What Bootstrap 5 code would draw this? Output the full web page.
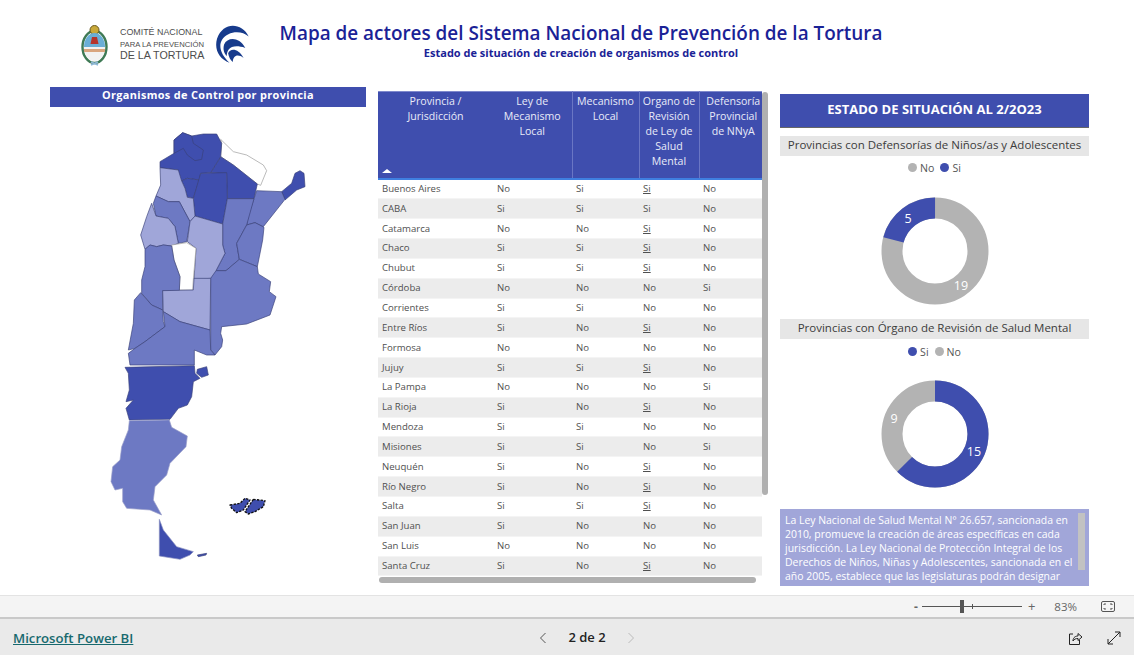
<!DOCTYPE html>
<html lang="es">
<head>
    <meta charset="UTF-8">
    <title>Mapa de actores</title>
    <link rel="stylesheet" href="https://cdn.jsdelivr.net/npm/bootstrap@5.3.0/dist/css/bootstrap.min.css">
    <style>
        html, body { height: 655px; overflow: hidden; }
        body { font-family: "Open Sans", "Noto Sans", sans-serif; background: #fff; color: #444; }
        .report-area { height: 595px; overflow: hidden; }

        /* header */
        .report-head { height: 86px; }
        .logo-box { width: 250px; padding: 24px 0 0 81px; }
        .logo-text { width: 108px; padding: 3px 0 0 12px; color: #4d4d4d; line-height: 11.5px; white-space: nowrap; font-family: "Liberation Sans", sans-serif; font-size: 7.7px; }
        .logo-text .first { font-size: 8.9px; }
        .logo-text .big { font-size: 10.7px; }
        .title-box { width: 662px; text-align: center; padding-top: 20px; color: #1a2296; }
        .title-box h1 { font-size: 18.9px; font-weight: 600; margin: 0; line-height: 26px; white-space: nowrap; }
        .title-box h2 { font-size: 11px; font-weight: 700; margin: 0; line-height: 14px; }

        /* columns */
        .map-col { width: 316px; margin-left: 50px; margin-right: 12px; margin-top: 1px; }
        .map-title { background: #3f4eae; color: #fff; font-size: 10.9px; font-weight: 700; text-align: center; height: 20px; line-height: 16px; letter-spacing: .35px; }
        .map-svg { display: block; width: 220px; height: 460px; margin: 13px 0 0 50px; }

        .tbl-col { width: 390px; margin-top: 5px; }
        .tbl-wrap { width: 384px; }
        .act-table { table-layout: fixed; width: 384px; font-size: 9.6px; margin: 0; }
        .act-table thead th { background: #3f4eae; color: #e9ebf8; font-weight: 400; font-size: 10.6px; line-height: 15px; text-align: center; vertical-align: top; height: 87.5px; padding: 2px 1px 0; border-top: 1px solid #7f89cc; border-bottom: 2px solid #3f7fe0; border-right: 1px solid #6a76c4; position: relative; }
        .act-table thead th.no-line { border-right: 0; }
        .act-table thead th.last-head { padding-left: 6px; }
        .sort-up { position: absolute; left: 4px; bottom: 5px; width: 0; height: 0; border-left: 5px solid transparent; border-right: 5px solid transparent; border-bottom: 4px solid #fff; }
        .act-table tbody td { height: 19.85px; padding: 0 0 0 4px; line-height: 18px; color: #505050; border: 0; border-bottom: 1px solid #f4f4f4; vertical-align: middle; white-space: nowrap; }
        .act-table tbody tr:nth-child(even) td { background: #ececec; }
        .scroll-v { width: 6px; height: 403px; margin: 1px 0 0 0; background: #b0b0b0; border-radius: 3px; }
        .scroll-h { width: 377px; height: 6px; margin: 1px 0 0 1px; background: #b0b0b0; border-radius: 3px; }

        .side-col { width: 309px; margin-left: 12px; margin-top: 8px; }
        .state-banner { background: #3f4eae; color: #fff; height: 34px; line-height: 31px; font-size: 13px; font-weight: 700; text-align: center; border-bottom: 1px solid #666; }
        .sub-band { background: #e6e6e6; color: #3c3c3c; font-size: 11.5px; height: 20px; line-height: 18px; text-align: center; white-space: nowrap; }
        .band-one { margin-top: 8px; }
        .band-two { margin-top: 13px; }
        .legend-row { font-size: 10.6px; height: 13px; line-height: 13px; color: #555; margin-top: 6px; gap: 6px; }
        .legend-low { margin-top: 7px; }
        .dot { display: inline-block; width: 9px; height: 9px; border-radius: 50%; margin-right: 3px; }
        .dot-blue { background: #3f4eae; }
        .dot-grey { background: #b3b3b3; }
        .donut { display: block; width: 110px; height: 110px; margin: 21px auto 0; }
        .donut-low { margin-top: 20px; }
        .donut text { font-family: "Open Sans", sans-serif; font-size: 12.5px; fill: #fff; text-anchor: middle; }
        .note-box { background: #a1a6d9; color: #fff; height: 77px; margin-top: 20px; overflow: hidden; padding: 4px 15px 0 5px; font-size: 10.45px; line-height: 14px; position: relative; }
        .note-scroll { position: absolute; right: 4px; top: 4px; width: 7px; height: 57px; background: #c2c2c2; }

        /* power bi chrome */
        .zoom-bar { height: 24px; background: #f4f4f4; border-top: 1px solid #e3e3e3; border-bottom: 2px solid #c9c9c9; color: #666; font-size: 11.5px; padding-right: 19px; }
        .zoom-track { width: 100px; height: 1px; background: #555; position: relative; margin: 0 4px; }
        .zoom-thumb { position: absolute; left: 38px; top: -6px; width: 4px; height: 13px; background: #555; }
        .zoom-tick { position: absolute; left: 50px; top: -2px; width: 1px; height: 5px; background: #555; }
        .zoom-minus { font-weight: 700; font-size: 12px; }
        .zoom-plus { font-size: 13px; margin-left: 2px; }
        .zoom-pct { margin-left: 19px; }
        .foot-bar { height: 36px; background: #eaeaea; padding-top: 2px; }
        .pbi-link { color: #17696e; font-size: 13.2px; font-weight: 600; text-decoration: underline; margin-left: 13px; width: 480px; white-space: nowrap; padding-top: 2px; }
        .pager { width: 120px; color: #222; font-size: 13px; font-weight: 600; margin-left: 34px; gap: 21px; }
        .foot-tools { margin-right: 13px; }
    </style>
</head>
<body>
    <div class="report-area">
        <!-- header with logos and title -->
        <div class="report-head d-flex">
            <div class="logo-box d-flex">
                <svg width="27" height="42" viewBox="0 0 27 42">
                    <ellipse cx="13.5" cy="23" rx="12" ry="16" fill="none" stroke="#3f7a55" stroke-width="2.4"/>
                    <circle cx="13.5" cy="6" r="4.5" fill="#c9a93a" stroke="#6b5a20"/>
                    <path d="M3 23a10.500 14 0 0 1 21 0z" fill="#6aaed6"/>
                    <path d="M3 23h21a10.500 14 0 0 1-21 0z" fill="#f2f2f2"/>
                    <path d="M11 13h5l1.500 7h-8z" fill="#b5342c"/>
                    <path d="M3 25h21v3H3z" fill="#d9a57e"/>
                    <path d="M10 38l7 3M17 38l-7 3" stroke="#8fb8d8" stroke-width="1.500"/>
                </svg>
                <div class="logo-text"><span class="first">COMITÉ NACIONAL</span><br>PARA LA PREVENCIÓN<br><span class="big">DE LA TORTURA</span></div>
                <svg width="33" height="39" viewBox="528 42 98 114">
                    <path d="M625 78C605 38 550 32 531 85C522 118 538 146 568 156C544 134 534 108 546 88C562 62 603 58 625 78Z" fill="#173b8c"/>
                    <path d="M615 112C596 78 562 80 552 102C548 116 552 128 560 136C560 118 572 98 615 112Z" fill="#173b8c"/>
                    <path d="M610 142C594 112 570 112 564 128C566 138 570 148 578 154C578 136 592 128 610 142Z" fill="#173b8c"/>
                </svg>
            </div>
            <div class="title-box">
                <h1>Mapa de actores del Sistema Nacional de Prevención de la Tortura</h1>
                <h2>Estado de situación de creación de organismos de control</h2>
            </div>
        </div>

        <div class="d-flex">
            <!-- map column -->
            <div class="map-col">
                <div class="map-title">Organismos de Control por provincia</div>
                <svg class="map-svg" viewBox="0 0 660 1380">
                    <g stroke="#3a4178" stroke-width="2" stroke-linejoin="round">
                        <!-- norte -->
                        <path fill="#fff" stroke="#999" d="M362 58L400 95L440 105L490 135L500 152L482 196L472 192L400 135L362 110L365 70Z"/>
                        <path fill="#3f4eae" d="M362 110L400 135L472 192L462 236L382 236L380 160L332 158Z"/>
                        <path fill="#3f4eae" d="M180 125L222 100L222 60L248 38L275 48L310 42L350 42L365 70L362 110L332 158L302 160L298 180L262 175L245 183L235 165L235 150L180 143Z"/>
                        <path fill="#3f4eae" d="M275 48L280 70L310 90L305 118L285 122L262 105L250 85L222 100L222 60L248 38Z"/>
                        <path fill="#3f4eae" d="M245 183L262 175L298 180L280 235L262 232L255 205Z"/>
                        <path fill="#3f4eae" d="M302 160L380 158L382 236L368 312L285 288L280 235Z"/>
                        <path fill="#3f4eae" d="M545 215L575 190L585 160L600 152L612 160L615 200L590 210L555 240Z"/>
                        <!-- litoral -->
                        <path fill="#6d79c3" d="M470 212L545 215L555 238L490 320L465 308L440 315L445 285L462 236Z"/>
                        <path fill="#6d79c3" d="M382 236L462 236L440 315L410 370L418 418L378 452L348 452L375 400L368 375L368 312Z"/>
                        <path fill="#6d79c3" d="M440 315L465 308L492 322L488 360L472 440L418 418L410 370Z"/>
                        <path fill="#6d79c3" d="M332 452L378 452L418 418L472 440L475 462L512 485L508 515L528 530L510 585L440 612L365 620L362 640L368 660L365 680L345 705L332 690Z"/>
                        <!-- centro y cuyo -->
                        <path fill="#a0a6d9" d="M180 143L235 150L245 183L255 205L262 232L280 235L285 288L270 305L238 245L205 245L168 228L182 195Z"/>
                        <path fill="#6d79c3" d="M168 228L205 245L238 245L270 305L260 365L235 370L225 320L205 295L168 288L160 250Z"/>
                        <path fill="#a0a6d9" d="M155 250L168 288L205 295L225 320L235 370L215 378L190 375L170 380L150 375L135 388L122 345L140 290Z"/>
                        <path fill="#a0a6d9" d="M285 288L368 312L368 375L375 400L348 452L332 475L282 478L288 385L262 365L270 305Z"/>
                        <path fill="#fff" stroke="#999" d="M215 375L260 368L288 385L280 478L278 510L238 510L240 470L222 420Z"/>
                        <path fill="#6d79c3" d="M135 388L150 375L170 380L190 375L215 378L222 420L240 470L238 512L188 512L188 570L155 555L125 520L125 480L135 440Z"/>
                        <path fill="#a0a6d9" d="M188 512L280 510L282 475L332 475L330 630L240 605L190 575Z"/>
                        <!-- patagonia -->
                        <path fill="#6d79c3" d="M122 518L155 555L188 570L190 605L195 620L135 665L105 685L85 690L100 610L103 540Z"/>
                        <path fill="#6d79c3" d="M195 620L190 575L240 605L330 630L332 690L345 705L320 705L283 690L283 735L90 735L85 700L105 685L135 665Z"/>
                        <path fill="#3f4eae" d="M75 742L283 737L285 760L300 775L280 785L275 830L262 855L235 865L210 898L88 900L78 865L100 840L78 845L88 810L85 760Z"/>
                        <path fill="#3f4eae" d="M292 748L320 740L325 765L305 772L290 760Z"/>
                        <path fill="#6d79c3" d="M88 902L208 900L215 922L262 948L258 980L210 1030L200 1065L165 1100L160 1140L185 1185L150 1170L80 1165L68 1145L68 1105L45 1110L33 1085L38 1040L60 1020L65 980L85 930Z" stroke="#9a9fc8"/>
                        <path fill="#3f4eae" d="M178 1198L190 1230L230 1280L280 1295L270 1305L240 1318L178 1308Z" stroke="#8a90c0"/>
                        <path fill="#3f4eae" d="M292 1305L320 1300L318 1305L295 1310Z"/>
                        <!-- malvinas -->
                        <path fill="#3f4eae" stroke="#111" stroke-width="4" stroke-dasharray="7 4" d="M390 1155L420 1150L435 1135L450 1140L430 1170L410 1178L395 1165Z"/>
                        <path fill="#3f4eae" stroke="#111" stroke-width="4" stroke-dasharray="7 4" d="M460 1138L495 1142L490 1160L465 1175L445 1182L435 1175Z"/>
                    </g>
                </svg>
            </div>

            <!-- table column -->
            <div class="tbl-col">
                <div class="d-flex">
                    <div class="tbl-wrap">
                        <table class="table act-table">
                            <colgroup>
                                <col style="width:115px"><col style="width:79px"><col style="width:67px"><col style="width:60px"><col style="width:63px">
                            </colgroup>
                            <thead>
                                <tr>
                                    <th class="no-line">Provincia /<br>Jurisdicción<span class="sort-up"></span></th>
                                    <th>Ley de<br>Mecanismo<br>Local</th>
                                    <th>Mecanismo<br>Local</th>
                                    <th>Organo de<br>Revisión<br>de Ley de<br>Salud<br>Mental</th>
                                    <th class="no-line last-head">Defensoría<br>Provincial<br>de NNyA</th>
                                </tr>
                            </thead>
                            <tbody>
                                <tr><td>Buenos Aires</td><td>No</td><td>Si</td><td><u>Si</u></td><td>No</td></tr>
                                <tr><td>CABA</td><td>Si</td><td>Si</td><td>Si</td><td>No</td></tr>
                                <tr><td>Catamarca</td><td>No</td><td>No</td><td><u>Si</u></td><td>No</td></tr>
                                <tr><td>Chaco</td><td>Si</td><td>Si</td><td><u>Si</u></td><td>No</td></tr>
                                <tr><td>Chubut</td><td>Si</td><td>Si</td><td><u>Si</u></td><td>No</td></tr>
                                <tr><td>Córdoba</td><td>No</td><td>No</td><td>No</td><td>Si</td></tr>
                                <tr><td>Corrientes</td><td>Si</td><td>Si</td><td>No</td><td>No</td></tr>
                                <tr><td>Entre Ríos</td><td>Si</td><td>No</td><td><u>Si</u></td><td>No</td></tr>
                                <tr><td>Formosa</td><td>No</td><td>No</td><td>No</td><td>No</td></tr>
                                <tr><td>Jujuy</td><td>Si</td><td>Si</td><td><u>Si</u></td><td>No</td></tr>
                                <tr><td>La Pampa</td><td>No</td><td>No</td><td>No</td><td>Si</td></tr>
                                <tr><td>La Rioja</td><td>Si</td><td>No</td><td><u>Si</u></td><td>No</td></tr>
                                <tr><td>Mendoza</td><td>Si</td><td>Si</td><td>No</td><td>No</td></tr>
                                <tr><td>Misiones</td><td>Si</td><td>Si</td><td>No</td><td>Si</td></tr>
                                <tr><td>Neuquén</td><td>Si</td><td>No</td><td><u>Si</u></td><td>No</td></tr>
                                <tr><td>Río Negro</td><td>Si</td><td>No</td><td><u>Si</u></td><td>No</td></tr>
                                <tr><td>Salta</td><td>Si</td><td>Si</td><td><u>Si</u></td><td>No</td></tr>
                                <tr><td>San Juan</td><td>Si</td><td>No</td><td>No</td><td>No</td></tr>
                                <tr><td>San Luis</td><td>No</td><td>No</td><td>No</td><td>No</td></tr>
                                <tr><td>Santa Cruz</td><td>Si</td><td>No</td><td><u>Si</u></td><td>No</td></tr>
                            </tbody>
                        </table>
                    </div>
                    <div class="scroll-v"></div>
                </div>
                <div class="scroll-h"></div>
            </div>

            <!-- donuts and note -->
            <div class="side-col">
                <div class="state-banner">ESTADO DE SITUACIÓN AL 2/2O23</div>
                <div class="sub-band band-one">Provincias con Defensorías de Niños/as y Adolescentes</div>
                <div class="legend-row d-flex justify-content-center"><span><span class="dot dot-grey"></span>No</span><span><span class="dot dot-blue"></span>Si</span></div>
                <svg class="donut" viewBox="0 0 110 110">
                    <circle cx="55" cy="55" r="43" fill="none" stroke="#b3b3b3" stroke-width="21"/>
                    <circle cx="55" cy="55" r="43" fill="none" stroke="#3f4eae" stroke-width="21" pathLength="24" stroke-dasharray="5 19" transform="rotate(-165 55 55)"/>
                    <text x="28" y="27">5</text>
                    <text x="81" y="94">19</text>
                </svg>
                <div class="sub-band band-two">Provincias con Órgano de Revisión de Salud Mental</div>
                <div class="legend-row legend-low d-flex justify-content-center"><span><span class="dot dot-blue"></span>Si</span><span><span class="dot dot-grey"></span>No</span></div>
                <svg class="donut donut-low" viewBox="0 0 110 110">
                    <circle cx="55" cy="55" r="43" fill="none" stroke="#b3b3b3" stroke-width="21"/>
                    <circle cx="55" cy="55" r="43" fill="none" stroke="#3f4eae" stroke-width="21" pathLength="24" stroke-dasharray="15 9" transform="rotate(-90 55 55)"/>
                    <text x="94" y="77">15</text>
                    <text x="14" y="44">9</text>
                </svg>
                <div class="note-box">
                    La Ley Nacional de Salud Mental N° 26.657, sancionada en 2010, promueve la creación de áreas específicas en cada jurisdicción. La Ley Nacional de Protección Integral de los Derechos de Niños, Niñas y Adolescentes, sancionada en el año 2005, establece que las legislaturas podrán designar
                    <div class="note-scroll"></div>
                </div>
            </div>
        </div>
    </div>

    <!-- zoom controls -->
    <div class="zoom-bar d-flex align-items-center justify-content-end">
        <span class="zoom-minus">-</span>
        <div class="zoom-track"><span class="zoom-thumb"></span><span class="zoom-tick"></span></div>
        <span class="zoom-plus">+</span>
        <span class="zoom-pct">83%</span>
        <svg class="ms-4" width="14" height="11" viewBox="0 0 14 11" fill="none" stroke="#555">
            <rect x=".5" y=".5" width="13" height="10" rx="1.500"/>
            <path d="M3 4V3h2M9 3h2v1M11 7v1H9M5 8H3V7"/>
        </svg>
    </div>

    <!-- footer -->
    <div class="foot-bar d-flex align-items-center">
        <a class="pbi-link" href="#">Microsoft Power BI</a>
        <div class="pager d-flex align-items-center justify-content-center">
            <svg width="8" height="12" viewBox="0 0 8 12" fill="none" stroke="#555"><path d="M6.500 1L1.500 6l5 5"/></svg>
            <span>2 de 2</span>
            <svg width="8" height="12" viewBox="0 0 8 12" fill="none" stroke="#bbb"><path d="M1.500 1l5 5-5 5"/></svg>
        </div>
        <div class="ms-auto d-flex align-items-center gap-4 foot-tools">
            <svg width="15" height="15" viewBox="0 0 15 15" fill="none" stroke="#222"><path d="M5 3H1.500v10.500h10V9"/><path d="M5 10C5 6 8 5 10 5V2.500L14 6l-4 3.500V7.500C8 7.500 6 8 5 10Z"/></svg>
            <svg width="14" height="14" viewBox="0 0 14 14" fill="none" stroke="#222"><path d="M1 13L13 1M8 1h5v5M1 8v5h5"/></svg>
        </div>
    </div>
    <script src="https://cdn.jsdelivr.net/npm/bootstrap@5.3.0/dist/js/bootstrap.bundle.min.js"></script>
</body>
</html>
